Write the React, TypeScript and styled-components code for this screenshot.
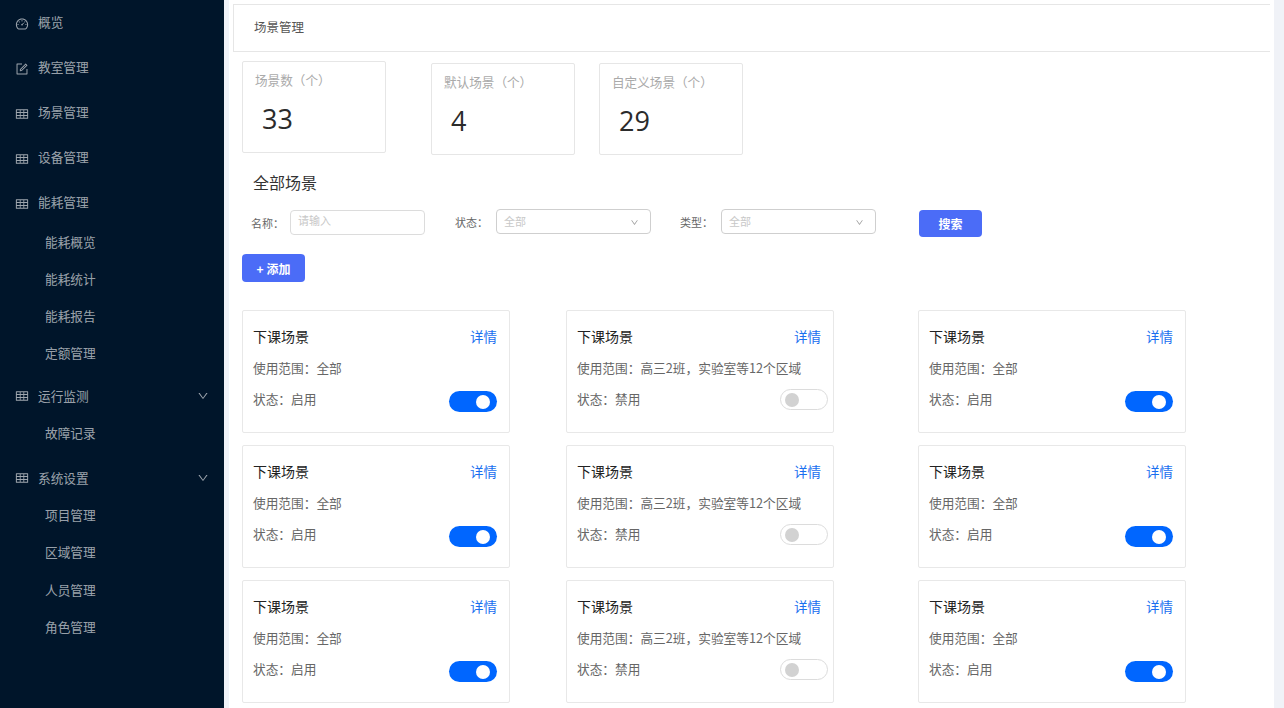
import React from "react";
import styled, { createGlobalStyle } from "styled-components";
import { AiOutlineDashboard, AiOutlineForm, AiOutlineTable, AiOutlineDown } from "react-icons/ai";

const Global = createGlobalStyle`
  html, body { margin: 0; padding: 0; height: 100%; overflow: hidden; background: #f0f2f7; }
  body { font-family: "Noto Sans CJK SC", "Liberation Sans", sans-serif; }
  * { box-sizing: border-box; }
`;

const Shell = styled.div`
  display: flex;
  width: 1284px;
  height: 708px;
  overflow: hidden;
`;
const Sidebar = styled.nav`
  flex: 0 0 224px;
  background: #00152a;
  padding-top: 3px;
  color: rgba(255, 255, 255, 0.62);
`;
const NavRow = styled.div<{ $gap: number }>`
  display: flex;
  align-items: center;
  height: 37px;
  margin-top: ${(p) => p.$gap}px;
  padding-left: 15px;
  padding-right: 15px;
  font-size: 12.7px;
`;
const NavIcon = styled.span<{ $drop: number }>`
  display: flex;
  width: 23px;
  font-size: 14px;
  margin-top: ${(p) => p.$drop}px;
`;
const NavLabel = styled.span`
  flex: 1;
`;
const SubRow = styled.div<{ $gap: number }>`
  display: flex;
  align-items: center;
  height: 37px;
  margin-top: ${(p) => p.$gap}px;
  padding-left: 45px;
  font-size: 12.7px;
`;
const Main = styled.main`
  flex: 0 0 1045px;
  margin-left: 5px;
  background: #fff;
  padding: 4px 4px 0;
  overflow: hidden;
`;
const PageHeader = styled.header`
  display: flex;
  align-items: center;
  height: 48px;
  padding: 0 0 4px 20px;
  border: 1px solid #e6e6e6;
  border-right: 0;
  font-size: 12.5px;
  color: #555;
`;
const Content = styled.div`
  padding-left: 9px;
`;
const Stats = styled.section`
  display: flex;
  align-items: flex-start;
  margin-top: 9px;
`;
const StatCard = styled.div<{ $left: number; $top: number }>`
  width: 144px;
  height: 92px;
  margin-left: ${(p) => p.$left}px;
  margin-top: ${(p) => p.$top}px;
  padding: 8px 12px 0;
  border: 1px solid #e6e6e6;
  border-radius: 2px;
`;
const StatLabel = styled.div`
  font-size: 12.6px;
  line-height: 20px;
  color: #aaa;
`;
const StatValue = styled.div`
  margin-top: 9px;
  padding-left: 7px;
  font-family: "Open Sans", sans-serif;
  font-size: 27px;
  line-height: 40px;
  color: #2b2b2b;
`;
const SectionTitle = styled.h2`
  margin: 15px 0 0 11px;
  font-size: 16px;
  font-weight: 400;
  line-height: 24px;
  color: #333;
`;
const FilterBar = styled.div`
  display: flex;
  align-items: flex-start;
  margin-top: 15px;
  height: 28px;
`;
const FilterLabel = styled.span<{ $left: number; $width: number; $top: number }>`
  width: ${(p) => p.$width}px;
  margin-left: ${(p) => p.$left}px;
  margin-top: ${(p) => p.$top}px;
  font-size: 11px;
  line-height: 16px;
  color: #666;
`;
const TextBox = styled.div`
  width: 135px;
  height: 25px;
  margin-top: 1px;
  padding-left: 7px;
  border: 1px solid #dcdcdc;
  border-radius: 4px;
  font-size: 11px;
  line-height: 19px;
  color: #c8c8c8;
`;
const SelectBox = styled.div`
  display: flex;
  align-items: center;
  justify-content: space-between;
  width: 155px;
  height: 25px;
  padding: 0 11px 2px 7px;
  border: 1px solid #cfcfcf;
  border-radius: 4px;
  font-size: 11px;
  color: #c8c8c8;
  svg { color: #999; font-size: 9px; margin-top: 4px; }
`;
const Button = styled.button<{ $left: number; $height: number; $top: number }>`
  width: 63px;
  height: ${(p) => p.$height}px;
  margin-left: ${(p) => p.$left}px;
  margin-top: ${(p) => p.$top}px;
  padding: 0;
  border: 0;
  border-radius: 4px;
  background: #4b6cf7;
  color: #fff;
  font-family: inherit;
  font-size: 12px;
  font-weight: 700;
  display: block;
`;
const Grid = styled.section`
  display: grid;
  grid-template-columns: 324px 352px 268px;
  row-gap: 12px;
  margin-top: 28px;
`;
const Card = styled.article`
  display: flex;
  flex-direction: column;
  width: 268px;
  height: 123px;
  padding: 15px 12px 0 10px;
  border: 1px solid #e8e8e8;
  border-radius: 2px;
`;
const CardHead = styled.div`
  display: flex;
  justify-content: space-between;
  align-items: center;
  height: 20px;
`;
const CardTitle = styled.span`
  font-size: 14px;
  color: #222;
`;
const DetailLink = styled.a`
  font-size: 13.5px;
  color: #1a6ff0;
`;
const Scope = styled.div`
  margin-top: 12px;
  font-size: 12.7px;
  line-height: 20px;
  color: #666;
`;
const StatusRow = styled.div`
  display: flex;
  justify-content: space-between;
  align-items: flex-start;
  margin-top: 11px;
  font-size: 12.7px;
  line-height: 20px;
  color: #666;
`;
const Toggle = styled.span<{ $on: boolean }>`
  display: flex;
  align-items: center;
  justify-content: ${(p) => (p.$on ? "flex-end" : "flex-start")};
  width: 48px;
  height: 21px;
  margin-top: ${(p) => (p.$on ? 2 : 0)}px;
  margin-right: ${(p) => (p.$on ? 0 : -7)}px;
  padding: ${(p) => (p.$on ? "0 7px" : "0 4px")};
  border-radius: 11px;
  background: ${(p) => (p.$on ? "#0066ff" : "#fff")};
  border: ${(p) => (p.$on ? "0" : "1px solid #dcdcdc")};
`;
const Knob = styled.span<{ $on: boolean }>`
  width: 14px;
  height: 14px;
  border-radius: 50%;
  background: ${(p) => (p.$on ? "#fff" : "#d2d2d2")};
`;

type Nav =
  | { kind: "top"; label: string; icon: React.ReactNode; gap: number; drop: number; arrow?: boolean }
  | { kind: "sub"; label: string; gap: number };

const nav: Nav[] = [
  { kind: "top", label: "概览", icon: <AiOutlineDashboard />, gap: 0, drop: 5 },
  { kind: "top", label: "教室管理", icon: <AiOutlineForm />, gap: 8, drop: 5 },
  { kind: "top", label: "场景管理", icon: <AiOutlineTable />, gap: 8, drop: 5 },
  { kind: "top", label: "设备管理", icon: <AiOutlineTable />, gap: 8, drop: 5 },
  { kind: "top", label: "能耗管理", icon: <AiOutlineTable />, gap: 8, drop: 5 },
  { kind: "sub", label: "能耗概览", gap: 3 },
  { kind: "sub", label: "能耗统计", gap: 0 },
  { kind: "sub", label: "能耗报告", gap: 0 },
  { kind: "sub", label: "定额管理", gap: 0 },
  { kind: "top", label: "运行监测", icon: <AiOutlineTable />, gap: 6, drop: 1, arrow: true },
  { kind: "sub", label: "故障记录", gap: 0 },
  { kind: "top", label: "系统设置", icon: <AiOutlineTable />, gap: 8, drop: 1, arrow: true },
  { kind: "sub", label: "项目管理", gap: 0 },
  { kind: "sub", label: "区域管理", gap: 0 },
  { kind: "sub", label: "人员管理", gap: 1 },
  { kind: "sub", label: "角色管理", gap: 0 },
];

const ArrowSlot = styled.span`
  display: flex;
  font-size: 12px;
`;

const columns = [
  { scope: "全部", status: "启用", on: true },
  { scope: "高三2班，实验室等12个区域", status: "禁用", on: false },
  { scope: "全部", status: "启用", on: true },
];

export default function App() {
  return (
    <Shell>
      <Global />
      <Sidebar>
        {nav.map((n) =>
          n.kind === "top" ? (
            <NavRow key={n.label} $gap={n.gap}>
              <NavIcon $drop={n.drop}>{n.icon}</NavIcon>
              <NavLabel>{n.label}</NavLabel>
              {n.arrow && (
                <ArrowSlot>
                  <AiOutlineDown />
                </ArrowSlot>
              )}
            </NavRow>
          ) : (
            <SubRow key={n.label} $gap={n.gap}>
              {n.label}
            </SubRow>
          )
        )}
      </Sidebar>
      <Main>
        <PageHeader>场景管理</PageHeader>
        <Content>
          <Stats>
            <StatCard $left={0} $top={0}>
              <StatLabel>场景数（个）</StatLabel>
              <StatValue>33</StatValue>
            </StatCard>
            <StatCard $left={45} $top={2}>
              <StatLabel>默认场景（个）</StatLabel>
              <StatValue>4</StatValue>
            </StatCard>
            <StatCard $left={24} $top={2}>
              <StatLabel>自定义场景（个）</StatLabel>
              <StatValue>29</StatValue>
            </StatCard>
          </Stats>
          <SectionTitle>全部场景</SectionTitle>
          <FilterBar>
            <FilterLabel $left={9} $width={39} $top={6}>名称：</FilterLabel>
            <TextBox>请输入</TextBox>
            <FilterLabel $left={30} $width={41} $top={5}>状态：</FilterLabel>
            <SelectBox>
              全部
              <AiOutlineDown />
            </SelectBox>
            <FilterLabel $left={29} $width={41} $top={5}>类型：</FilterLabel>
            <SelectBox>
              全部
              <AiOutlineDown />
            </SelectBox>
            <Button $left={43} $height={27} $top={1}>搜索</Button>
          </FilterBar>
          <Button $left={0} $height={28} $top={17}>+ 添加</Button>
          <Grid>
            {[0, 1, 2].flatMap((r) =>
              columns.map((c, i) => (
                <Card key={`${r}-${i}`}>
                  <CardHead>
                    <CardTitle>下课场景</CardTitle>
                    <DetailLink>详情</DetailLink>
                  </CardHead>
                  <Scope>使用范围：{c.scope}</Scope>
                  <StatusRow>
                    <span>状态：{c.status}</span>
                    <Toggle $on={c.on}>
                      <Knob $on={c.on} />
                    </Toggle>
                  </StatusRow>
                </Card>
              ))
            )}
          </Grid>
        </Content>
      </Main>
    </Shell>
  );
}
